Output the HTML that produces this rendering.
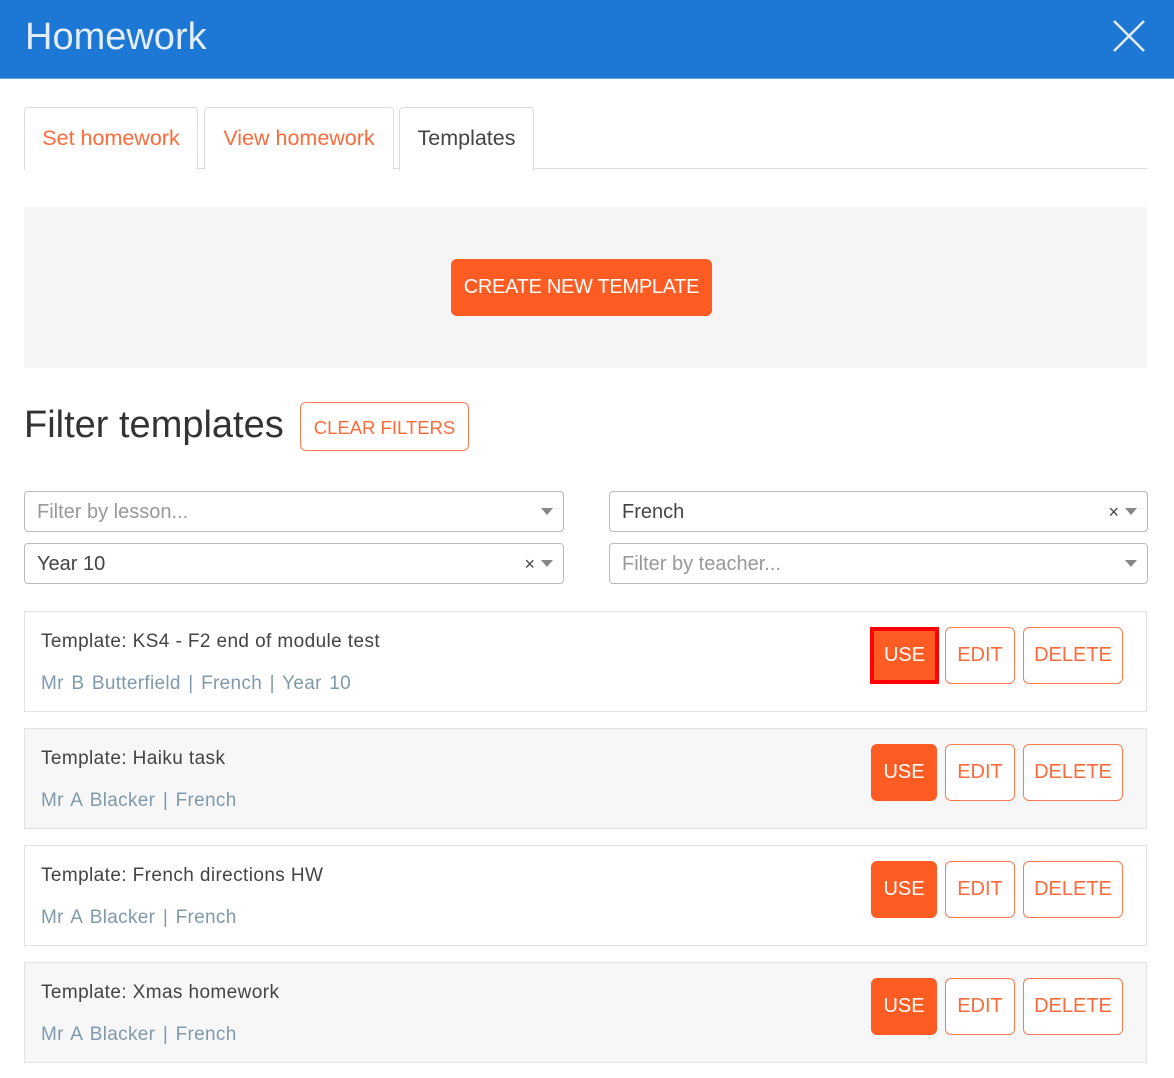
<!DOCTYPE html>
<html><head><meta charset="utf-8"><style>
*{box-sizing:border-box;margin:0;padding:0}
body{width:1174px;height:1078px;background:#fff;font-family:"Liberation Sans",sans-serif;position:relative;overflow:hidden}
.a{position:absolute}
.hdr{left:0;top:0;width:1174px;height:79px;background:#1c78d4;border-bottom:1px solid #6aa8e6}
.hdr span{position:absolute;left:25px;top:16px;font-size:38px;color:#e4eefa}
.tab{top:107px;height:63px;border:1px solid #ddd;border-bottom:none;border-radius:4px 4px 0 0;font-size:21.5px;color:#ff6a3a;text-align:center;line-height:60px;background:#fff;white-space:nowrap}
.tabline{left:24px;top:168px;width:1123px;height:1px;background:#ddd}
.btn{border-radius:6px;text-align:center;font-size:20px}
.sel{height:41px;border:1px solid #bbb;border-radius:4px;font-size:20px;color:#444;line-height:41px;padding-left:12px}
.sel .ar{position:absolute;right:10px;top:16px;width:0;height:0;border-left:6px solid transparent;border-right:6px solid transparent;border-top:7px solid #888}
.sel .x{position:absolute;right:28px;top:0;font-size:18px;color:#444}
.card{left:24px;width:1123px;height:101px;border:1px solid #e2e2e2;background:#f7f7f7}
.card .t{position:absolute;left:16px;top:19px;font-size:19px;color:#444;letter-spacing:0.4px}
.card .m{position:absolute;left:16px;top:61px;font-size:19px;color:#7f9aae;letter-spacing:0.3px;word-spacing:2px}
.use{position:absolute;left:846px;top:15px;width:66px;height:57px;background:#ff5c23;color:#fff;line-height:57px;border-radius:6px;font-size:20px;text-align:center}
.ed,.de{position:absolute;top:15px;height:57px;border:1px solid #ff7a4d;color:#ff6a3a;background:#fff;line-height:55px;border-radius:6px;font-size:20px;text-align:center}
.ed{left:920px;width:70px}.de{left:998px;width:100px}
</style></head><body>
<div class="a hdr"><span>Homework</span>
<svg class="a" style="left:1113px;top:20px" width="32" height="32" viewBox="0 0 32 32"><path d="M1 1L31 31M31 1L1 31" stroke="#e4eefa" stroke-width="2.5"/></svg></div>
<div class="a tabline"></div>
<div class="a tab" style="left:24px;width:174px">Set homework</div>
<div class="a tab" style="left:204px;width:190px">View homework</div>
<div class="a tab" style="left:399px;width:135px;color:#444;height:64px">Templates</div>
<div class="a" style="left:24px;top:207px;width:1123px;height:161px;background:#f5f5f5"></div>
<div class="a btn" style="left:451px;top:259px;width:261px;height:57px;background:#ff5c23;color:#fff;line-height:57px;font-size:20px;letter-spacing:-0.3px">CREATE NEW TEMPLATE</div>
<div class="a" style="left:24px;top:404px;font-size:38px;color:#333">Filter templates</div>
<div class="a btn" style="left:300px;top:402px;width:169px;height:49px;border:1px solid #ff7a4d;color:#ff6a3a;line-height:49px;font-size:18.5px">CLEAR FILTERS</div>
<div class="a sel" style="left:24px;top:491px;width:540px;color:#999">Filter by lesson...<i class="ar"></i></div>
<div class="a sel" style="left:609px;top:491px;width:539px">French<span class="x">×</span><i class="ar"></i></div>
<div class="a sel" style="left:24px;top:543px;width:540px">Year 10<span class="x">×</span><i class="ar"></i></div>
<div class="a sel" style="left:609px;top:543px;width:539px;color:#999">Filter by teacher...<i class="ar"></i></div>
<div class="a card" style="top:611px;background:#fff"><div class="t">Template: KS4 - F2 end of module test</div><div class="m">Mr B Butterfield | French | Year 10</div><div class="use" style="border:4px solid #f00;border-radius:0;left:845px;width:69px;line-height:49px">USE</div><div class="ed">EDIT</div><div class="de">DELETE</div></div>
<div class="a card" style="top:728px"><div class="t">Template: Haiku task</div><div class="m">Mr A Blacker | French</div><div class="use">USE</div><div class="ed">EDIT</div><div class="de">DELETE</div></div>
<div class="a card" style="top:845px;background:#fff"><div class="t">Template: French directions HW</div><div class="m">Mr A Blacker | French</div><div class="use">USE</div><div class="ed">EDIT</div><div class="de">DELETE</div></div>
<div class="a card" style="top:962px"><div class="t">Template: Xmas homework</div><div class="m">Mr A Blacker | French</div><div class="use">USE</div><div class="ed">EDIT</div><div class="de">DELETE</div></div>
</body></html>
